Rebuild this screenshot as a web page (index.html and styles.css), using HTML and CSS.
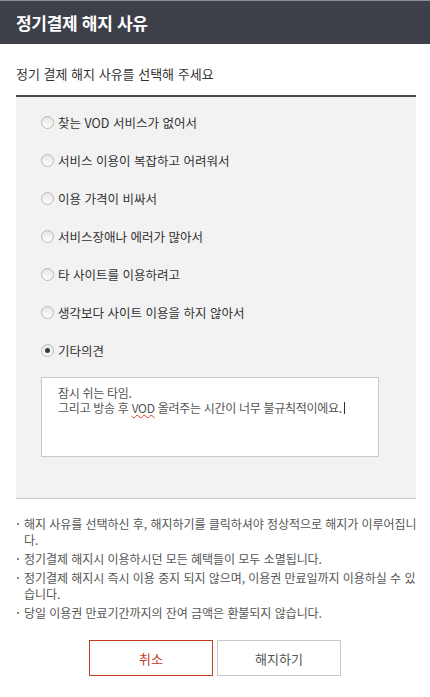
FILE: index.html
```html
<!DOCTYPE html>
<html lang="ko">
<head>
    <meta charset="UTF-8">
    <meta name="viewport" content="width=device-width, initial-scale=1.0">
    <title>정기결제 해지 사유</title>
    <link rel="stylesheet" href="styles.css">
</head>
<body>
    <div class="popup">
        <h1 class="popup-title">정기결제 해지 사유</h1>

        <div class="popup-body">
            <p class="guide">정기 결제 해지 사유를 선택해 주세요</p>

            <div class="reason-box">
                <ul class="reason-list">
                    <li><label><span class="radio"></span>찾는 VOD 서비스가 없어서</label></li>
                    <li><label><span class="radio"></span>서비스 이용이 복잡하고 어려워서</label></li>
                    <li><label><span class="radio"></span>이용 가격이 비싸서</label></li>
                    <li><label><span class="radio"></span>서비스장애나 에러가 많아서</label></li>
                    <li><label><span class="radio"></span>타 사이트를 이용하려고</label></li>
                    <li><label><span class="radio"></span>생각보다 사이트 이용을 하지 않아서</label></li>
                    <li><label><span class="radio checked"></span>기타의견</label></li>
                </ul>
                <!-- 기타의견 입력 -->
                <div class="etc-input">잠시 쉬는 타임.<br>그리고 방송 후 <span class="typo">VOD</span> 올려주는 시간이 너무 불규칙적이에요.<span class="caret"></span></div>
            </div>

            <ul class="notice">
                <li>해지 사유를 선택하신 후, 해지하기를 클릭하셔야 정상적으로 해지가 이루어집니다.</li>
                <li>정기결제 해지시 이용하시던 모든 혜택들이 모두 소멸됩니다.</li>
                <li>정기결제 해지시 즉시 이용 중지 되지 않으며, 이용권 만료일까지 이용하실 수 있습니다.</li>
                <li>당일 이용권 만료기간까지의 잔여 금액은 환불되지 않습니다.</li>
            </ul>

            <div class="btn-area">
                <button class="btn btn-cancel">취소</button>
                <button class="btn">해지하기</button>
            </div>
        </div>
    </div>
</body>
</html>
```

FILE: styles.css
```css
body {
    margin: 0;
    background: #fff;
    font-family: "Noto Sans CJK KR", "Noto Sans", sans-serif;
    color: #333;
}

ul {
    list-style: none;
    margin: 0;
    padding: 0;
}

.popup-title {
    margin: 0;
    height: 43px;
    line-height: 43px;
    padding-left: 16px;
    background: #3d4049;
    border-top: 1px solid #8e8f94;
    color: #fff;
    font-size: 17px;
    font-weight: bold;
    letter-spacing: -0.3px;
}

.popup-body {
    padding: 0 14px 0 16px;
}

.guide {
    margin: 0;
    padding: 19px 0 0;
    height: 32px;
    line-height: 22px;
    font-size: 13px;
    color: #333;
}

.reason-box {
    border-top: 2px solid #484b56;
    border-bottom: 1px solid #c8c8c8;
    background: #f2f2f2;
    padding: 6px 0 41px 25px;
}

.reason-list li {
    height: 38px;
    display: flex;
    align-items: center;
}

.reason-list label {
    display: flex;
    align-items: center;
    gap: 4px;
    font-size: 12.5px;
    color: #333;
}

.radio {
    width: 11px;
    height: 11px;
    border: 1px solid #b9b9b9;
    border-radius: 50%;
    background: linear-gradient(#e6e6e6, #fdfdfd);
    position: relative;
}

.radio.checked::after {
    content: "";
    position: absolute;
    left: 3px;
    top: 3px;
    width: 5px;
    height: 5px;
    border-radius: 50%;
    background: #3a3a3a;
}

.etc-input {
    margin-top: 8px;
    width: 303px;
    height: 64px;
    padding: 7px 17px 7px 16px;
    background: #fff;
    border: 1px solid #c8c8c8;
    font-size: 12px;
    line-height: 15px;
    color: #555;
    letter-spacing: -0.3px;
}

.typo {
    text-decoration: underline wavy #e0352b;
    text-decoration-thickness: 1px;
    text-underline-offset: 1px;
}

.caret {
    display: inline-block;
    width: 1px;
    height: 12px;
    background: #333;
    vertical-align: -1px;
    margin-left: 2px;
}

.notice {
    margin: 17px -4px 0 0;
}

.notice li {
    position: relative;
    padding-left: 8px;
    margin-bottom: 3px;
    font-size: 12px;
    line-height: 16px;
    color: #555;
    letter-spacing: -0.05px;
    word-break: break-all;
}

.notice li::before {
    content: "";
    position: absolute;
    left: 1px;
    top: 7px;
    width: 2px;
    height: 2px;
    background: #888;
}

.btn-area {
    display: flex;
    justify-content: center;
    gap: 4px;
    margin: 19px 0 0 -2px;
}

.btn {
    width: 124px;
    height: 36px;
    background: #fff;
    border: 1px solid #c8c8c8;
    font-family: inherit;
    font-size: 13px;
    color: #555;
    cursor: pointer;
}

.btn-cancel {
    border-color: #c23a20;
    color: #c23a20;
}
```
